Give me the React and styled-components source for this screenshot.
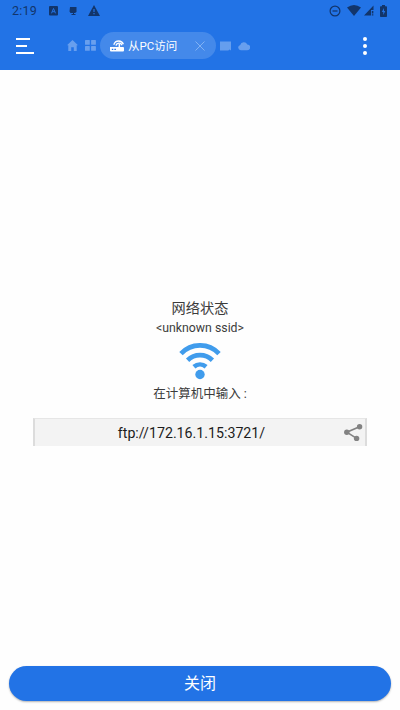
import React from "react";
import styled, { createGlobalStyle } from "styled-components";

const GlobalStyle = createGlobalStyle`
  * {
    box-sizing: border-box;
  }

  body {
    margin: 0;
    background: #fff;
    font-family: Roboto, "Noto Sans CJK SC", sans-serif;
  }

  svg {
    display: block;
    flex: none;
  }
`;

const App = () => {
  return (
    <Screen>
      <GlobalStyle />
      <Header>
        <StatusBar>
          <Clock>2:19</Clock>
          <StatusIcons $gap={11}>
            <svg width="9" height="10" viewBox="0 0 9 10">
              <rect width="9" height="9.5" rx="1" fill="#12356b" />
              <path d="M2.5 7.3 4.5 2.5l2 4.8M3.2 5.7h2.6" fill="none" stroke="#2273e6" />
            </svg>
            <svg width="8" height="10" viewBox="0 0 8 10">
              <path d="M1 1h6.5v5L6 7H5v1h1.5v1h-4V8H4V7H1.5L.5 5.5z" fill="#12356b" />
            </svg>
            <svg width="12" height="11" viewBox="0 0 12 11">
              <path d="M6 0 12 11H0z" fill="#12356b" />
              <path d="M6 4v3M6 8v1.2" stroke="#2273e6" strokeWidth="1.2" />
            </svg>
          </StatusIcons>
          <StatusIcons $right>
            <svg width="12" height="12" viewBox="0 0 12 12">
              <circle cx="6" cy="6" r="4.9" fill="none" stroke="#12356b" strokeWidth="1.2" />
              <path d="M3.5 6h5" stroke="#12356b" strokeWidth="1.2" />
            </svg>
            <Spacer $w={6} />
            <svg width="14" height="11" viewBox="0 0 14 11">
              <path d="M0 2.6Q7-2.4 14 2.6L7 11z" fill="#12356b" />
            </svg>
            <Spacer $w={3} />
            <svg width="10" height="11" viewBox="0 0 10 11">
              <path d="M0 10.5 9.5.5V5H7v5.5z" fill="#12356b" />
              <path d="M8.6 6v2.6M8.6 9.3v1.2" stroke="#12356b" strokeWidth="1.5" />
            </svg>
            <Spacer $w={6} />
            <svg width="7" height="12" viewBox="0 0 7 12">
              <path d="M2 0h3v1.2h1.2q.8 0 .8.8v9.2q0 .8-.8.8H.8q-.8 0-.8-.8V2q0-.8.8-.8H2z" fill="#12356b" />
              <path d="M4 3 1.8 7h1.5v3L5.3 6H4z" fill="#2273e6" />
            </svg>
          </StatusIcons>
        </StatusBar>

        <Toolbar>
          <MenuButton aria-label="menu">
            <MenuLine $w={14} />
            <MenuLine $w={11} />
            <MenuLine $w={18} />
          </MenuButton>
          <TabIcons $left={33}>
            <svg width="11" height="11" viewBox="0 0 11 11">
              <path d="M5.5 0 11 5.2H9.7V11H6.8V7.2H4.2V11H1.3V5.2H0z" fill="#689fee" />
            </svg>
            <svg width="11" height="11" viewBox="0 0 11 11">
              <g fill="#689fee">
                <rect width="4.8" height="4.8" rx=".6" />
                <rect x="6.1" width="4.8" height="4.8" rx=".6" />
                <rect y="6" width="4.8" height="4.8" rx=".6" />
                <rect x="6.1" y="6" width="4.8" height="4.8" rx=".6" />
              </g>
            </svg>
          </TabIcons>
          <ActiveTab>
            <svg width="14" height="12" viewBox="0 0 14 12">
              <path d="M0 7h8.6V4h1.5v3h2.9q1 0 1 1v2.6q0 1-1 1H1q-1 0-1-1z" fill="#fff" />
              <path d="M3.8 4.8Q4.9 1 8.8 1q3.2 0 4.6 3.2M6 5.6q.7-2.4 3.2-2.4 2 0 2.8 2" fill="none" stroke="#fff" strokeWidth="1.3" />
              <path d="M1.8 8.8h1.5v1.3H1.8zM4.4 8.8h1.5v1.3H4.4z" fill="#2273e6" />
            </svg>
            <TabLabel>从PC访问</TabLabel>
            <svg width="10" height="10" viewBox="0 0 10 10">
              <path d="m.5.5 9 9m0-9-9 9" stroke="#82b2f3" strokeWidth="1" />
            </svg>
          </ActiveTab>
          <TabIcons $left={4}>
            <svg width="11" height="10" viewBox="0 0 11 10">
              <path d="M0 .5h11V9.5L9.5 8.4 8.3 9.5H0z" fill="#659eee" />
            </svg>
            <svg width="12" height="10" viewBox="0 0 12 10">
              <path d="M2.8 9.2A2.7 2.7 0 0 1 2.2 3.9 3.8 3.8 0 0 1 9.3 3.4a2.9 2.9 0 0 1 0 5.8z" fill="#689fee" />
            </svg>
          </TabIcons>
          <MoreButton aria-label="more">
            <Dot />
            <Dot />
            <Dot />
          </MoreButton>
        </Toolbar>
      </Header>

      <Content>
        <Title>网络状态</Title>
        <Ssid>&lt;unknown ssid&gt;</Ssid>
        <WifiIcon width="42" height="37" viewBox="0 0 42 37">
          <g fill="none" stroke="#409cec" strokeWidth="4.7">
            <path d="M2 10.6a26 26 0 0 1 38 0" />
            <path d="M8.6 17.2a17.8 17.8 0 0 1 24.8 0" />
            <path d="M14.9 23.7a9.6 9.6 0 0 1 12.2 0" />
          </g>
          <circle cx="21" cy="31.5" r="4.7" fill="#409cec" />
        </WifiIcon>
        <Hint>在计算机中输入 :</Hint>
        <AddressBox>
          <Address>ftp://172.16.1.15:3721/</Address>
          <svg width="20" height="18" viewBox="0 0 20 18">
            <path d="M16.5 2.8 3.8 8.2 13.6 14.4" fill="none" stroke="#828282" strokeWidth="1.6" />
            <g fill="#828282">
              <circle cx="16.6" cy="2.8" r="2.7" />
              <circle cx="3.8" cy="8.2" r="2.7" />
              <circle cx="13.6" cy="14.4" r="2.7" />
            </g>
          </svg>
        </AddressBox>
      </Content>

      <CloseButton>关闭</CloseButton>
    </Screen>
  );
};

const Screen = styled.div`
  display: flex;
  flex-direction: column;
  width: 400px;
  height: 710px;
  overflow: hidden;
  background: #fefefe;
`;

const Header = styled.header`
  height: 70px;
  background: #2273e6;
`;

const StatusBar = styled.div`
  display: flex;
  align-items: center;
  height: 21px;
  padding: 0 13px 0 12px;
`;

const Clock = styled.span`
  width: 37px;
  color: #12356b;
  font-size: 12.5px;
  line-height: 21px;
  letter-spacing: 0.2px;
`;

const StatusIcons = styled.div`
  display: flex;
  align-items: center;
  gap: ${({ $gap }) => $gap || 0}px;
  margin-left: ${({ $right }) => ($right ? "auto" : "0")};
`;

const Spacer = styled.span`
  width: ${({ $w }) => $w}px;
`;

const Toolbar = styled.div`
  display: flex;
  align-items: center;
  height: 49px;
  padding: 0 33px 0 16px;
`;

const MenuButton = styled.button`
  display: flex;
  flex-direction: column;
  gap: 5px;
  width: 18px;
  padding: 0;
  border: 0;
  background: none;
`;

const MenuLine = styled.span`
  width: ${({ $w }) => $w}px;
  height: 2px;
  background: #fff;
`;

const TabIcons = styled.div`
  display: flex;
  align-items: center;
  gap: 7px;
  margin-left: ${({ $left }) => $left}px;
`;

const ActiveTab = styled.div`
  display: flex;
  align-items: center;
  width: 116px;
  height: 27px;
  margin-left: 4px;
  padding: 0 11px 0 10px;
  border-radius: 14px;
  background: #4489ea;
`;

const TabLabel = styled.span`
  flex: 1;
  margin-left: 4px;
  color: #fff;
  font-size: 11.5px;
  line-height: 20px;
  white-space: nowrap;
`;

const MoreButton = styled.button`
  display: flex;
  flex-direction: column;
  gap: 3px;
  margin-left: auto;
  padding: 0;
  border: 0;
  background: none;
`;

const Dot = styled.span`
  width: 4px;
  height: 4px;
  border-radius: 50%;
  background: #fff;
`;

const Content = styled.main`
  display: flex;
  flex: 1;
  flex-direction: column;
  align-items: center;
  padding-top: 227px;
  color: #3c3c3c;
`;

const Title = styled.div`
  font-size: 14.2px;
  line-height: 22px;
`;

const Ssid = styled.div`
  font-size: 12.3px;
  line-height: 18px;
`;

const WifiIcon = styled.svg`
  margin-top: 6px;
`;

const Hint = styled.div`
  margin-top: 5px;
  font-size: 12.5px;
  line-height: 18px;
`;

const AddressBox = styled.div`
  display: flex;
  align-items: center;
  width: 334px;
  height: 28px;
  margin-top: 15px;
  padding-right: 2px;
  border: solid #dcdcdc;
  border-width: 1px 2px 0;
  border-top-color: #e6e6e6;
  background: #f3f3f3;
`;

const Address = styled.span`
  flex: 1;
  padding-left: 5px;
  color: #1c1c1c;
  font-size: 14.2px;
  text-align: center;
`;

const CloseButton = styled.button`
  height: 35px;
  margin: 0 9px 9px;
  padding: 1px 0 0;
  border: 0;
  border-radius: 18px;
  background: #2273e6;
  box-shadow: 0 1px 2px rgba(0, 0, 0, 0.3);
  color: #fff;
  font-family: inherit;
  font-size: 16px;
  line-height: 34px;
`;

export default App;
